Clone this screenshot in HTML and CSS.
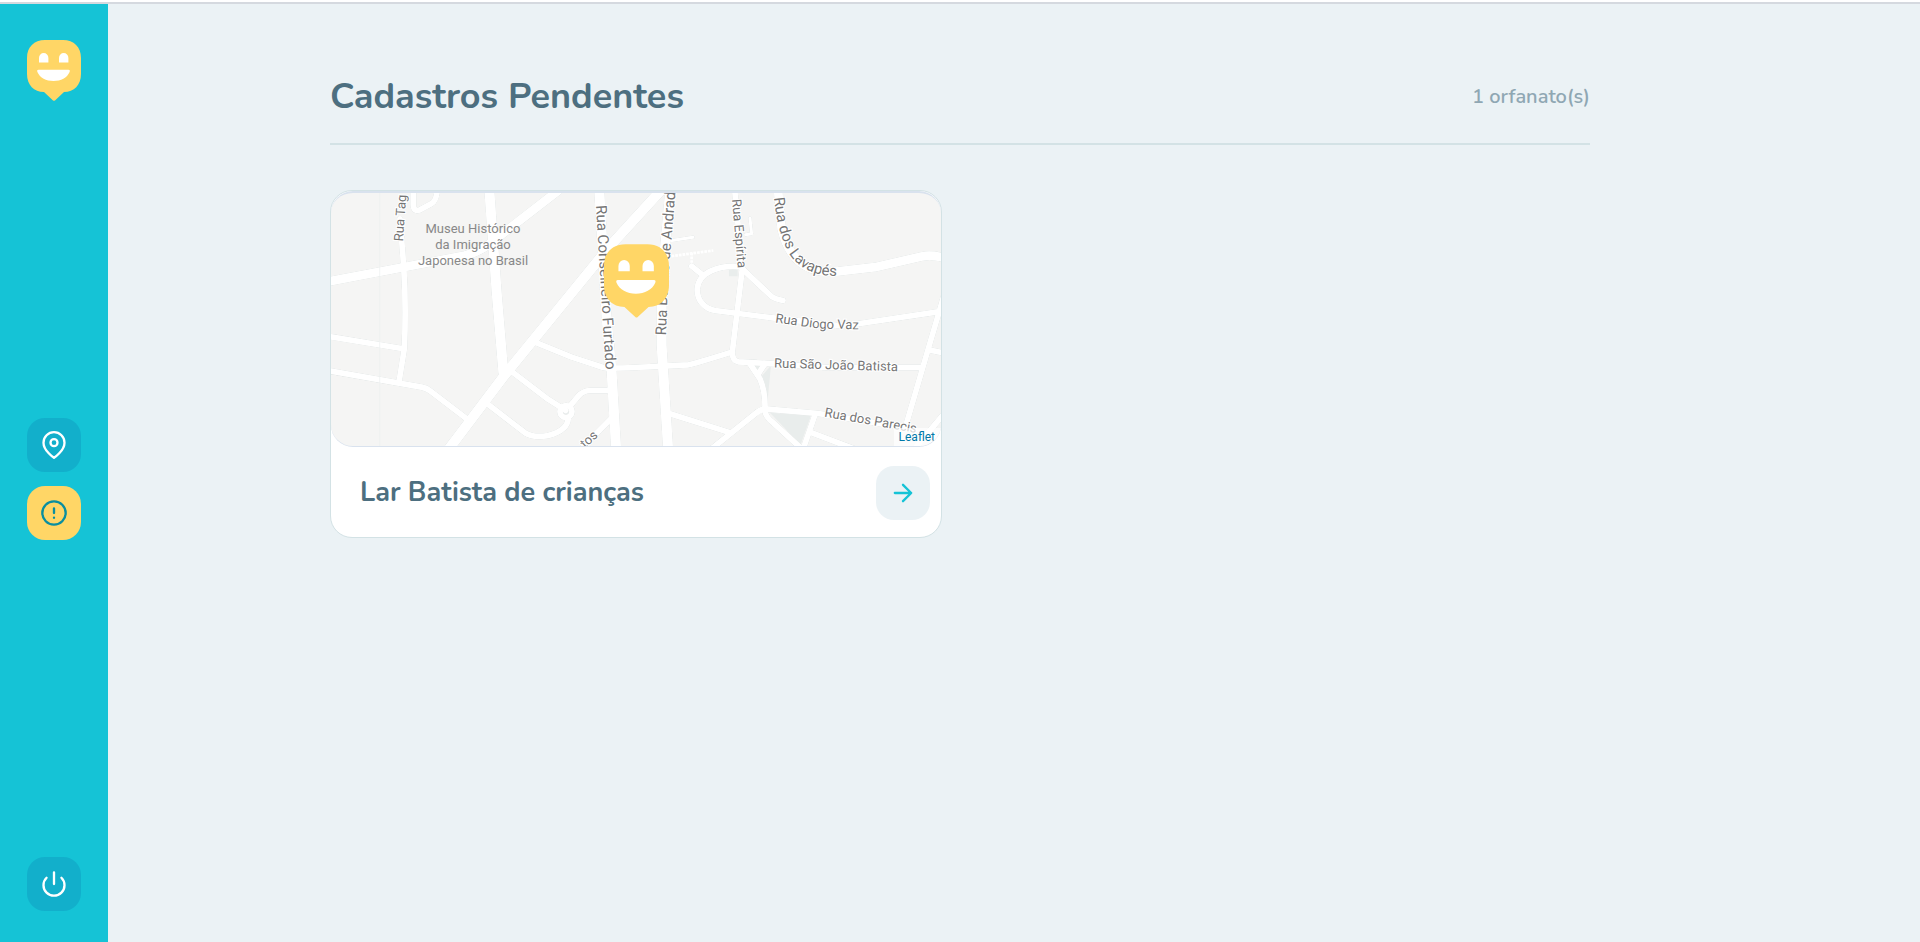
FILE: index.html
```html
<!DOCTYPE html>
<html lang="pt-BR">
<head>
<meta charset="utf-8">
<title>Cadastros Pendentes</title>
<meta name="viewport" content="width=device-width, initial-scale=1">
<link rel="stylesheet" href="styles.css">
</head>
<body>
<svg width="0" height="0" class="sprite" aria-hidden="true">
  <symbol id="happy-pin" viewBox="0 0 54 61">
    <path fill="#ffd666" d="M18 0H36C47 0 54 7 54 18V34C54 45 47 52 37 52L28 60.400Q27 61.300 26 60.400L17 52C7 52 0 45 0 34V18C0 7 7 0 18 0Z"/>
    <path fill="#fff" d="M12 22.500V18A4.700 5 0 0 1 21.400 18V22.500ZM32 22.500V18A4.700 5 0 0 1 41.400 18V22.500ZM11.500 29.700H41.500Q43.400 29.700 42.600 32C40 38 34 41 26.500 41S13 38 10.400 32Q9.600 29.700 11.500 29.700Z"/>
  </symbol>
</svg>
<aside class="sidebar">
  <a class="logo" href="#" aria-label="Happy"><svg><use href="#happy-pin"/></svg></a>
  <nav class="nav">
    <a class="side-button" href="#" aria-label="Orfanatos cadastrados">
      <svg class="icon" viewBox="0 0 24 24"><path d="M21 10c0 7-9 13-9 13s-9-6-9-13a9 9 0 0 1 18 0z"/><circle cx="12" cy="10" r="3"/></svg>
    </a>
    <a class="side-button active" href="#" aria-label="Cadastros pendentes" aria-current="page">
      <svg class="icon" viewBox="0 0 24 24"><circle cx="12" cy="12" r="10"/><path d="M12 8v4M12 16h.01"/></svg>
    </a>
  </nav>
  <button class="side-button" type="button" aria-label="Sair">
    <svg class="icon" viewBox="0 0 24 24"><path d="M18.360 6.640a9 9 0 1 1-12.730 0M12 2v10"/></svg>
  </button>
</aside>
<main class="content">
  <header class="page-header">
    <h1>Cadastros Pendentes</h1>
    <span class="count">1 orfanato(s)</span>
  </header>
  <section class="grid">
    <article class="card">
      <div class="map">
        <svg class="tiles" viewBox="0 0 610 254" preserveAspectRatio="xMidYMid slice">
          <defs>
            <g id="roads" fill="none" stroke-linejoin="round" stroke-linecap="round">
              <g class="wide">
                <path d="M372 790L538 570L852 185L1003 20L1023 0"/>
                <path d="M492 0L515 320L535 560"/>
                <path d="M822 0L845 400L860 560L874 800"/>
                <path d="M1037 0L1010 300L1010 480L1030 800"/>
              </g>
              <g class="medium">
                <path d="M0 290L235 245L420 210Q460 200 490 178L700 15"/>
                <path d="M1358 0L1370 130Q1400 260 1520 260L1650 245L1790 213Q1820 206 1860 218"/>
              </g>
              <g class="narrow">
                <path d="M225 100L236 240Q244 360 238 490L222 590"/>
                <path d="M0 451L235 490M0 554L290 605Q305 608 315 616L425 700"/>
                <path d="M265 0V60Q267 80 285 73L320 54Q336 46 338 0"/>
                <path d="M635 472L740 515L835 546Q850 549 930 546L1090 538Q1105 536 1220 500"/>
                <path d="M560 558L670 642L722 675"/>
                <circle cx="723" cy="678" r="18"/>
                <path d="M738 658L760 632Q775 615 795 615H862"/>
                <path d="M487 655L600 742Q625 758 670 750Q728 735 730 698"/>
                <path d="M858 700L810 748L770 790"/>
                <path d="M1035 685L1210 740"/>
                <path d="M1100 242L1135 270M1250 244C1180 236 1120 262 1117 310C1115 345 1140 370 1170 375L1350 398L1540 420L1600 415L1860 376"/>
                <path d="M1228 0L1252 250L1222 500Q1222 525 1240 529L1350 535L1500 546H1790"/>
                <path d="M1252 250L1340 333Q1350 340 1374 345"/>
                <path d="M1860 320L1810 490L1740 730M1810 493L1860 503"/>
                <path d="M1275 535L1305 580Q1322 620 1320 672M1320 535L1298 568"/>
                <path d="M1160 790L1288 687Q1305 672 1320 670L1480 684L1750 728"/>
                <path d="M1320 675Q1322 695 1345 712L1430 790M1470 688L1435 790M1455 740L1600 795"/>
                <path d="M1870 670L1760 800"/>
              </g>
              <path class="lane" d="M1040 165L1104 155M1275 98L1280 145L1262 148"/>
            </g>
            <path id="p-cons" d="M265 13L276 200"/>
            <path id="p-bueno" d="M335 143L337 90L346 -20"/>
            <path id="p-esp" d="M401 7L408 90"/>
            <path id="p-lav" d="M443 5Q446 35 453 50Q462 76 490 82Q504 85 525 82"/>
            <path id="p-diogo" d="M444 130L488 136L540 137"/>
            <path id="p-sao" d="M443 175L580 179"/>
            <path id="p-par" d="M493 224L600 243"/>
          </defs>
          <g transform="translate(-6 -7) scale(.3333)">
            <path fill="#e9edec" d="M1335 682L1458 690L1427 778ZM1282 538H1316L1300 562ZM1303 580L1338 540L1328 645ZM1212 252H1238V272H1212ZM710 666h26v26h-26z"/>
            <use href="#roads" class="casing"/>
            <use href="#roads" class="surface"/>
            <path class="steps" d="M1040 212L1165 195M1100 202V236"/>
            <path stroke="#eceeee" stroke-width="2" d="M164 0V800"/>
          </g>
          <g class="place">
            <text x="142" y="40">Museu Histórico</text>
            <text x="142" y="56">da Imigração</text>
            <text x="142" y="72">Japonesa no Brasil</text>
          </g>
          <g class="street">
            <text class="small" transform="translate(72 49) rotate(-86)">Rua Tag</text>
            <text><textPath href="#p-cons">Rua Conselheiro Furtado</textPath></text>
            <text><textPath href="#p-bueno">Rua Bueno de Andrade</textPath></text>
            <text class="small"><textPath href="#p-esp">Rua Espírita</textPath></text>
            <text><textPath href="#p-lav">Rua dos Lavapés</textPath></text>
            <text class="small"><textPath href="#p-diogo">Rua Diogo Vaz</textPath></text>
            <text class="small"><textPath href="#p-sao">Rua São João Batista</textPath></text>
            <text class="small"><textPath href="#p-par">Rua dos Parecis</textPath></text>
            <text class="small" transform="translate(254 256) rotate(-42)">tos</text>
          </g>
        </svg>
        <svg class="marker"><use href="#happy-pin"/></svg>
        <a class="attribution" href="#">Leaflet</a>
      </div>
      <footer class="card-footer">
        <h2>Lar Batista de crianças</h2>
        <a class="open" href="#" aria-label="Ver Lar Batista de crianças">
          <svg class="icon" viewBox="0 0 24 24"><path d="M5 12h14M12 5l7 7-7 7"/></svg>
        </a>
      </footer>
    </article>
  </section>
</main>
</body>
</html>
```
FILE: styles.css
```css
* { box-sizing: border-box; margin: 0; padding: 0; }

body {
  min-height: 100vh;
  border-top: 2px solid #fff;
  background: #ebf2f5;
  color: #4d6f80;
  font-family: Nunito, Lato, sans-serif;
}

body::before {
  content: "";
  display: block;
  height: 2px;
  background: #d5d9df;
}

.sprite { position: absolute; }

.icon {
  width: 28px;
  height: 28px;
  fill: none;
  stroke: currentColor;
  stroke-width: 2;
  stroke-linecap: round;
  stroke-linejoin: round;
}

.sidebar {
  position: fixed;
  top: 4px;
  bottom: 0;
  left: 0;
  width: 108px;
  padding: 36px 0 31px;
  display: flex;
  flex-direction: column;
  align-items: center;
  justify-content: space-between;
  background: #15c3d6;
}

.logo, .logo svg { display: block; width: 54px; height: 61px; }

.nav { display: grid; gap: 14px; }

.side-button, .open {
  display: flex;
  align-items: center;
  justify-content: center;
  width: 54px;
  height: 54px;
  border: 0;
  border-radius: 18px;
  background: #12afcb;
  color: #fff;
}

.side-button.active { background: #ffd666; color: #0a8ea0; }

.content {
  max-width: 1260px;
  margin: 0 auto;
  padding-top: 65px;
}

.page-header {
  display: flex;
  align-items: center;
  justify-content: space-between;
  padding-bottom: 18px;
  border-bottom: 2px solid #d3e2e5;
}

h1 { font-size: 36px; line-height: 56px; font-weight: 700; }

.count { font-size: 20px; line-height: 28px; font-weight: 600; color: #8fa7b3; }

.grid {
  display: grid;
  grid-template-columns: repeat(2, 1fr);
  gap: 36px;
  padding-top: 45px;
}

.card {
  border: 1px solid #d3e2e5;
  border-radius: 22px;
  background: #fff;
}

.map {
  position: relative;
  height: 256px;
  overflow: hidden;
  border: 1px solid #d9e2ee;
  border-width: 2px 0 1px;
  border-radius: 22px;
  background: #f5f5f4;
}

.tiles { display: block; width: 100%; height: 100%; }

.casing { stroke: #ebeeed; }
.surface { stroke: #fff; }
.wide { stroke-width: 30; }
.medium { stroke-width: 26; }
.narrow { stroke-width: 17; }
.lane { stroke-width: 9; }
.casing { filter: drop-shadow(0 0 1px #d5dbdb) drop-shadow(0 0 1px #e3e7e7); }
.steps { fill: none; stroke: #fff; stroke-width: 8; stroke-dasharray: 8 3; }

.place { font: 13px Roboto, sans-serif; fill: #888; text-anchor: middle; }
.street { font: 15px Roboto, sans-serif; fill: #757575; stroke: #fff; stroke-width: 2px; paint-order: stroke; }
.street .small { font-size: 13px; }

.marker {
  position: absolute;
  top: 51px;
  left: 50%;
  width: 65px;
  height: 74px;
  margin-left: -32px;
}

.attribution {
  position: absolute;
  right: 0;
  bottom: 0;
  padding: 0 6px 0 5px;
  background: rgba(255, 255, 255, .7);
  color: #0078a8;
  font: 12px/18px Roboto, sans-serif;
  text-decoration: none;
}

.card-footer {
  display: flex;
  align-items: center;
  justify-content: space-between;
  padding: 19px 11px 17px 29px;
}

h2 { font-size: 27px; line-height: 38px; font-weight: 700; }

.open { background: #ebf2f5; color: #15c3d6; }
```
